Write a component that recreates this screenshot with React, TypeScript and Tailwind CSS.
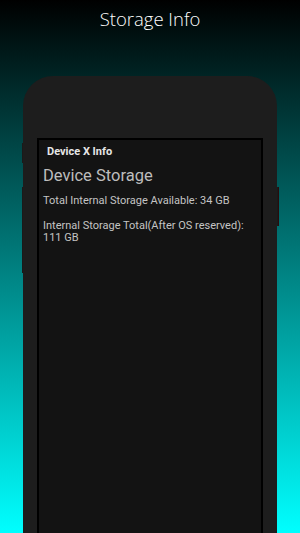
export default function App() {
  return (
    <div className="w-[300px] h-[533px] overflow-hidden flex flex-col bg-[linear-gradient(to_bottom,#000000,#00ffff)]">
      <h1 className="h-[38px] pt-[6px] text-center text-white text-[18.5px] font-light leading-[26px] [font-family:'Open_Sans',sans-serif]">
        Storage Info
      </h1>
      <div className="relative mt-[38px] mx-[23px] flex-1 flex flex-col bg-[#1d1d1d] rounded-t-[30px]">
        <span className="absolute left-[-1px] top-[67px] w-[1px] h-[20px] bg-[#1a1a1a]" />
        <span className="absolute left-[-1px] top-[111px] w-[1px] h-[86px] bg-[#1a1a1a]" />
        <span className="absolute right-[-2px] top-[111px] w-[2px] h-[39px] bg-[#1a1a1a] border-r border-[#2a0c0c]" />
        <div className="mt-[62px] mx-[14px] flex-1 bg-[#131313] border-2 border-b-0 border-black px-[4px] pt-[5px] [font-family:Roboto,sans-serif]">
          <div className="pl-[4px] text-[11px] font-bold text-[#e6e6e6] leading-[14px]">Device X Info</div>
          <div className="mt-[7px] text-[16.5px] text-[#bdbdbd] leading-[20px]">Device Storage</div>
          <div className="mt-[9px] text-[11px] text-[#c4c4c4] leading-[12px]">Total Internal Storage Available: 34 GB</div>
          <div className="mt-[13px] text-[11px] text-[#c4c4c4] leading-[12px]">
            Internal Storage Total(After OS reserved):
            <br />
            111 GB
          </div>
        </div>
      </div>
    </div>
  );
}
